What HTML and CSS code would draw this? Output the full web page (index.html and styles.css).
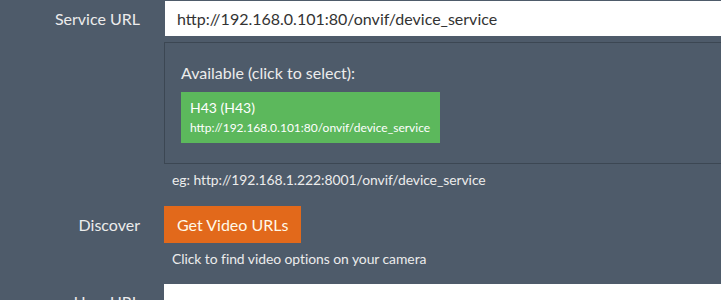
FILE: index.html
```html
<!DOCTYPE html>
<html>
<head>
<meta charset="utf-8">
<link rel="stylesheet" href="styles.css">
</head>
<body>
<div class="form">
  <div class="row">
    <div class="label">Service URL</div>
    <div class="control">
      <div class="input">http://192.168.0.101:80/onvif/device_service</div>
      <div class="available">
        <div class="avail-title">Available (click to select):</div>
        <div class="device">
          <div class="device-name">H43 (H43)</div>
          <div class="device-url">http://192.168.0.101:80/onvif/device_service</div>
        </div>
      </div>
      <div class="help">eg: http://192.168.1.222:8001/onvif/device_service</div>
    </div>
  </div>
  <div class="row discover">
    <div class="label">Discover</div>
    <div class="control">
      <div class="button">Get Video URLs</div>
      <div class="help">Click to find video options on your camera</div>
    </div>
  </div>
  <div class="row user">
    <div class="label">User URL</div>
    <div class="control">
      <div class="input"></div>
    </div>
  </div>
</div>
</body>
</html>
```
FILE: styles.css
```css
html, body {
  margin: 0;
  padding: 0;
  background: #4e5b6a;
  font-family: Lato, "Open Sans", sans-serif;
  color: #ececec;
  overflow: hidden;
}
.form {
  padding-top: 1px;
  display: flex;
  flex-direction: column;
}
.row {
  display: flex;
}
.label {
  width: 140px;
  flex: none;
  text-align: right;
  font-size: 16px;
  padding-right: 24px;
}
.row:first-child .label {
  line-height: 35px;
}
.control {
  flex: 1;
  min-width: 0;
}
.input {
  height: 35px;
  background: #ffffff;
  color: #333;
  font-size: 16px;
  line-height: 35px;
  padding-left: 12px;
  margin-left: 1px;
  margin-right: -20px;
}
.available {
  margin-top: 6px;
  border: 1px solid #3c4753;
  border-right: none;
  margin-right: -20px;
  padding: 21px 16px 20px 16px;
  height: 79px;
}
.avail-title {
  font-size: 16px;
  line-height: 18px;
  margin-bottom: 10px;
}
.device {
  display: inline-block;
  background: #5cb85c;
  color: #fff;
  padding: 7px 10px 6px 9px;
  height: 38px;
}
.device-name {
  font-size: 14px;
  line-height: 18px;
  margin-bottom: 3px;
}
.device-url {
  font-size: 12px;
  line-height: 16px;
}
.help {
  font-size: 13.9px;
  letter-spacing: -0.05px;
  padding-left: 8px;
  margin-top: 7px;
  line-height: 18px;
}
.discover {
  margin-top: 17px;
}
.discover .label {
  line-height: 37px;
}
.button {
  display: inline-block;
  background: #e2691b;
  color: #fff8e8;
  font-size: 16px;
  height: 37px;
  line-height: 37px;
  padding: 0 13px;
}
.user {
  margin-top: 16px;
}
.user .label {
  line-height: 35px;
}
.user .input {
  margin-left: 0;
}
```
